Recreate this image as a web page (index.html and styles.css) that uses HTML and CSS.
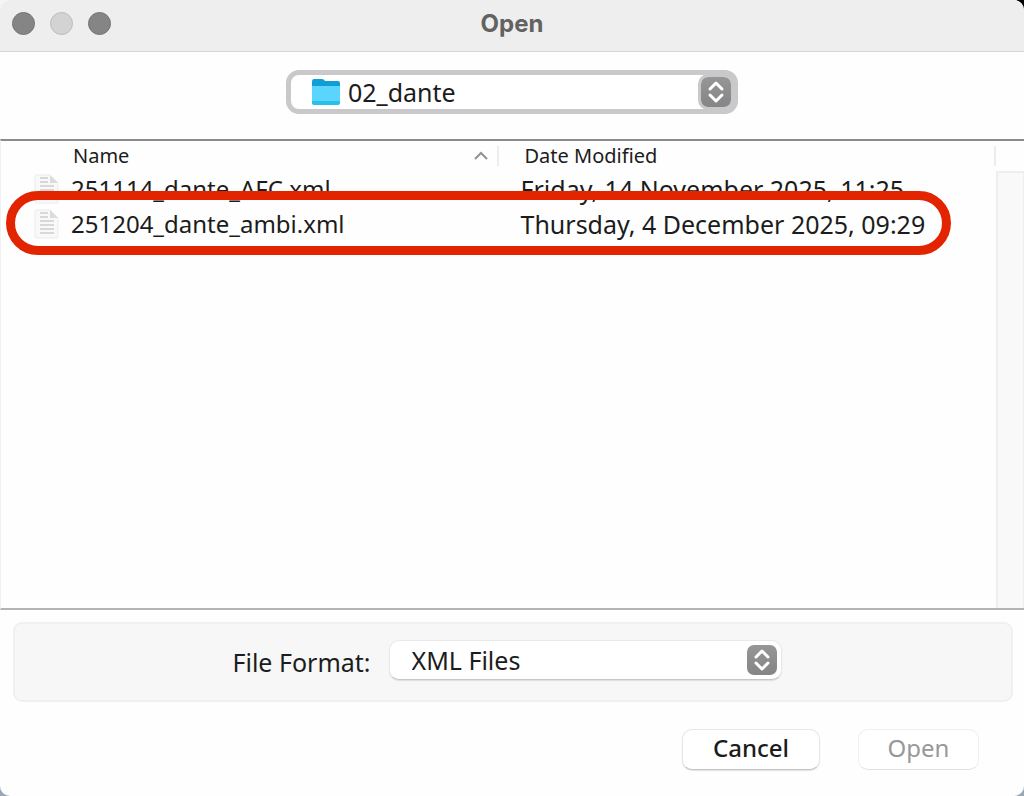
FILE: index.html
```html
<!DOCTYPE html>
<html lang="en">
<head>
<meta charset="utf-8">
<meta name="viewport" content="width=device-width, initial-scale=1">
<title>Open</title>
<link rel="stylesheet" href="styles.css">
</head>
<body>
<main class="dialog">
  <header class="titlebar">
    <div class="lights">
      <button class="light" type="button" aria-label="Close"></button>
      <button class="light light-off" type="button" aria-label="Minimize"></button>
      <button class="light" type="button" aria-label="Zoom"></button>
    </div>
    <h1 class="title">Open</h1>
  </header>

  <div class="location">
    <div class="popup popup-focus">
      <svg class="folder" viewBox="0 0 30 28" aria-hidden="true">
        <path d="M1 4Q1 1 3 1H11Q13 1 14 3H27Q29 3 29 5V24Q29 27 26 27H4Q1 27 1 24Z" fill="#0d9fd5"/>
        <path d="M1 8H29V24Q29 27 26 27H4Q1 27 1 24Z" fill="#5ad5fd"/>
        <path d="M1 23H29V24Q29 27 26 27H4Q1 27 1 24Z" fill="#28bfe8"/>
      </svg>
      <select class="popup-select" aria-label="Folder"><option>02_dante</option></select>
      <svg class="stepper" viewBox="0 0 30 30" aria-hidden="true">
        <path d="M9 12L15 6L21 12M9 18L15 24L21 18"/>
      </svg>
    </div>
  </div>

  <section class="browser">
    <table class="files">
      <thead>
        <tr>
          <th class="col-name" scope="col"><div class="head-cell">Name
            <svg class="sort" viewBox="0 0 16 10" aria-hidden="true"><path d="M2 8L8 2L14 8"/></svg></div></th>
          <th class="col-date" scope="col"><div class="head-cell">Date Modified</div></th>
        </tr>
      </thead>
      <tbody>
        <tr>
          <td><div class="file">
            <svg class="doc" viewBox="0 0 26 30" aria-hidden="true"><path class="sheet" d="M3 1H16L24 9V27Q24 29 22 29H3Q1 29 1 27V3Q1 1 3 1Z"/><path class="fold" d="M16 1V9H24Z"/><path class="lines" d="M6 4H14M6 8H14M6 12H20M6 16H20M6 20H20M6 24H20"/></svg>251114_dante_AFC.xml</div></td>
          <td class="date">Friday, 14 November 2025, 11:25</td>
        </tr>
        <tr>
          <td><div class="file">
            <svg class="doc" viewBox="0 0 26 30" aria-hidden="true"><path class="sheet" d="M3 1H16L24 9V27Q24 29 22 29H3Q1 29 1 27V3Q1 1 3 1Z"/><path class="fold" d="M16 1V9H24Z"/><path class="lines" d="M6 4H14M6 8H14M6 12H20M6 16H20M6 20H20M6 24H20"/></svg>251204_dante_ambi.xml</div></td>
          <td class="date">Thursday, 4 December 2025, 09:29</td>
        </tr>
      </tbody>
    </table>
    <div class="scroll-track"></div>
    <div class="highlight"></div>
  </section>

  <section class="format">
    <label class="format-label" for="format">File Format:</label>
    <div class="popup popup-format">
      <select class="popup-select" id="format"><option>XML Files</option></select>
      <svg class="stepper" viewBox="0 0 30 30" aria-hidden="true">
        <path d="M9 12L15 6L21 12M9 18L15 24L21 18"/>
      </svg>
    </div>
  </section>

  <footer class="actions">
    <button class="action action-cancel" type="button">Cancel</button>
    <button class="action action-open" type="button" disabled>Open</button>
  </footer>
</main>
</body>
</html>
```
FILE: styles.css
```css
* { box-sizing: border-box; }

body {
  margin: 0;
  background: linear-gradient(to bottom, transparent 50%, #9aa8b5 50%), linear-gradient(to right, #f4f4f4 50%, #000 50%);
  color: #1c1c1c;
  font-family: "Noto Sans", sans-serif;
  font-size: 24px;
}

.dialog {
  display: flex;
  flex-direction: column;
  min-height: 100vh;
  overflow: hidden;
  border-radius: 10px;
  background: #fefefe;
}

.titlebar {
  display: grid;
  grid-template-columns: 1fr auto 1fr;
  align-items: center;
  height: 52px;
  padding: 0 12px 4px;
  border-bottom: 1px solid #d6d6d6;
  background: #eee;
}

.lights { display: flex; gap: 14px; }

.light {
  width: 23px;
  height: 23px;
  margin-right: 1px;
  padding: 0;
  border: 1px solid #747474;
  border-radius: 50%;
  background: #858585;
}

.light-off { border-color: #bcbcbc; background: #d3d3d3; }

.title {
  margin: 0;
  color: #626262;
  font-family: Inter, sans-serif;
  font-size: 24px;
  font-weight: 700;
  line-height: 32px;
}

.location {
  display: flex;
  justify-content: center;
  padding: 18px 0 25px;
}

.popup {
  display: flex;
  align-items: center;
  border-radius: 10px;
  background: #fff;
}

.popup-focus {
  width: 452px;
  height: 44px;
  padding: 0 2px 0 20px;
  border: 5px solid #c9c9cb;
  border-radius: 13px;
}

.popup-format {
  width: 393px;
  height: 40px;
  padding: 0 4px 0 18px;
  border: 1px solid #e9e9e9;
  border-bottom-color: #c6c6c6;
  box-shadow: 0 1px 1px #ddd;
}

.popup-select {
  flex: 1;
  min-width: 0;
  padding: 0 4px;
  border: 0;
  appearance: none;
  background: transparent;
  color: #1c1c1c;
  font: inherit;
  font-size: 25px;
  line-height: 32px;
}

.folder { width: 30px; height: 28px; margin-right: 3px; }

.stepper {
  flex: none;
  width: 30px;
  height: 30px;
  border-radius: 7px;
  background: linear-gradient(#969696, #858585);
}

.popup-focus .stepper { box-shadow: 0 0 0 3px #c9c9cb; }

.stepper path {
  fill: none;
  stroke: #fff;
  stroke-width: 3;
  stroke-linecap: round;
  stroke-linejoin: round;
}

.browser {
  position: relative;
  display: flex;
  flex: 1;
  align-items: flex-start;
  border-top: 2px solid #8b8b8b;
  border-bottom: 2px solid #b3b3b3;
  border-left: 1px solid #f1f1f1;
}

.files {
  flex: 1;
  border-collapse: collapse;
  table-layout: fixed;
}

.files th {
  height: 30px;
  padding: 0;
  font-size: 20px;
  font-weight: 400;
  line-height: 20px;
  text-align: left;
}

.col-name { width: 50%; }

.head-cell {
  display: flex;
  align-items: center;
  justify-content: space-between;
  height: 20px;
  padding-right: 8px;
  padding-left: 26px;
  border-right: 2px solid #ececec;
}

.col-name .head-cell { padding-left: 72px; }

.sort { width: 16px; height: 10px; }
.sort path { fill: none; stroke: #929292; stroke-width: 2; }

.files td {
  height: 35px;
  padding: 0 0 0 33px;
  line-height: 34px;
  white-space: nowrap;
}

.files .date { padding-left: 22px; font-size: 25px; }
.file { display: flex; align-items: center; gap: 11px; }

.doc { width: 26px; height: 30px; }
.sheet { fill: #f9f9f9; stroke: #ebebeb; }
.fold { fill: #dcdcdc; }
.lines { stroke: #d8d8d8; stroke-width: 2; }

.scroll-track {
  align-self: stretch;
  width: 28px;
  margin-top: 30px;
  border: 2px solid #eee;
  border-width: 2px 1px 0 2px;
  background: #f9f9f9;
}

.highlight {
  position: absolute;
  top: 50px;
  right: 73px;
  left: 5px;
  height: 64px;
  border: 9px solid #e32400;
  border-radius: 32px;
}

.format {
  display: flex;
  align-items: center;
  justify-content: center;
  gap: 18px;
  height: 80px;
  margin: 12px 11px 0 13px;
  padding: 0 12px 4px 0;
  border: 2px solid #f0f0f0;
  border-radius: 9px;
  background: #f7f7f7;
}

.format-label { padding-top: 4px; font-size: 25px; line-height: 32px; }

.actions {
  display: flex;
  justify-content: flex-end;
  gap: 38px;
  padding: 27px 45px 26px;
}

.action {
  height: 41px;
  padding: 0 0 3px;
  border: 1px solid #e6e6e6;
  border-bottom-color: #c4c4c4;
  border-radius: 10px;
  background: #fff;
  box-shadow: 0 1px 1px #e2e2e2;
  color: #1c1c1c;
  font: inherit;
  line-height: 32px;
}

.action-cancel { width: 138px; font-weight: 500; }

.action-open {
  width: 121px;
  border-color: #f0f0f0;
  border-bottom-color: #e2e2e2;
  box-shadow: none;
  color: #989898;
}
```
